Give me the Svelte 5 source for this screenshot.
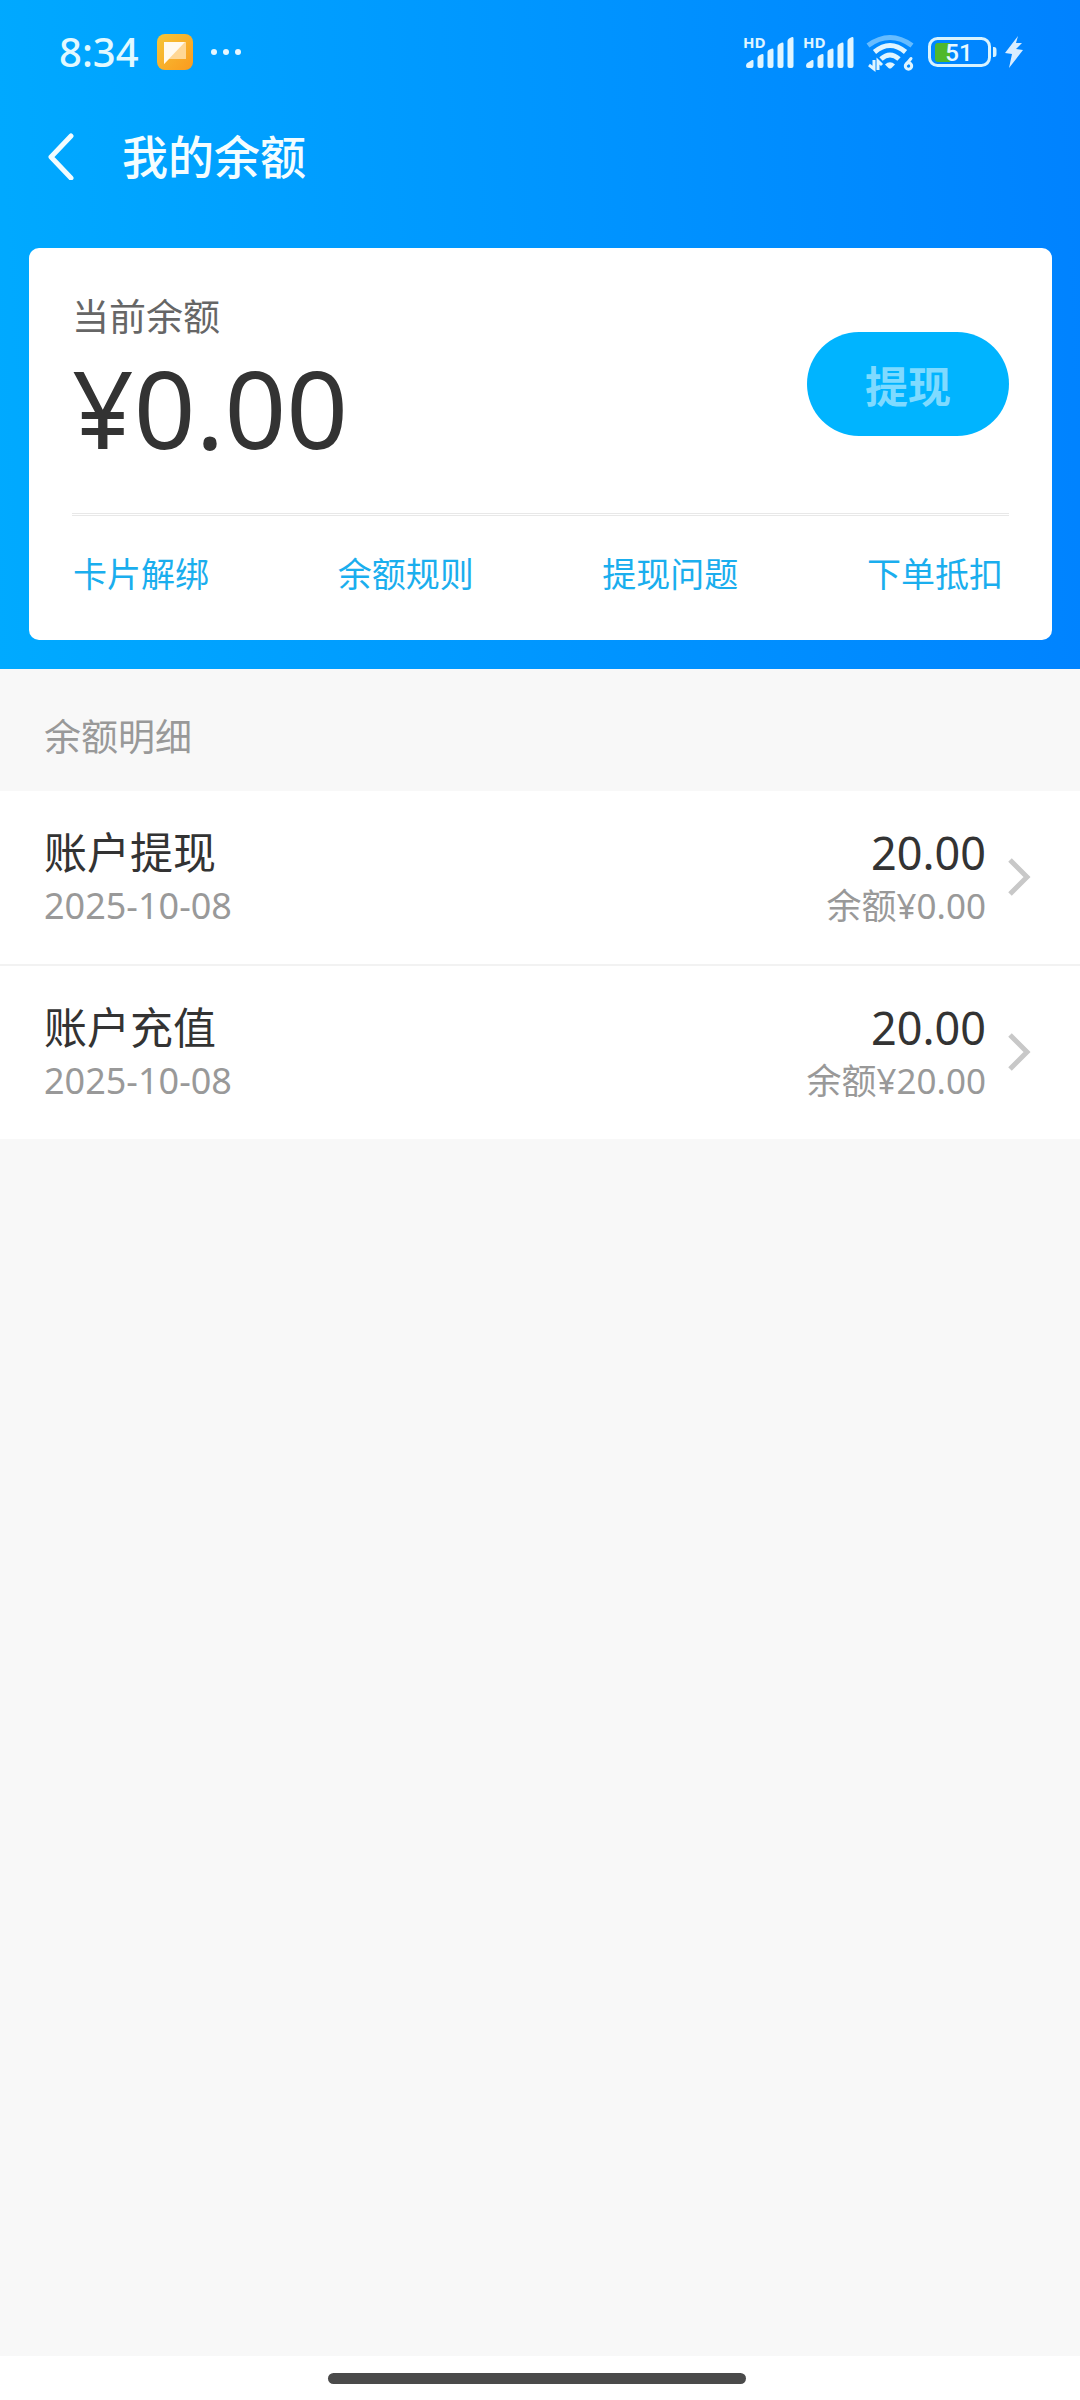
<script>
  const links = ['卡片解绑', '余额规则', '提现问题', '下单抵扣'];
  const records = [
    { title: '账户提现', date: '2025-10-08', amount: '20.00', balance: '0.00' },
    { title: '账户充值', date: '2025-10-08', amount: '20.00', balance: '20.00' }
  ];
  const sims = [1, 2];
</script>

<div class="page">
  <header class="top">
    <div class="status">
      <div class="status-left">
        <span class="time">8:34</span>
        <svg class="app" width="36" height="36" viewBox="0 0 36 36" aria-hidden="true">
          <defs>
            <linearGradient id="gold" x1="0" y1="0" x2="1" y2="1">
              <stop offset="0" stop-color="#f5c638" />
              <stop offset="1" stop-color="#fb9a1e" />
            </linearGradient>
          </defs>
          <rect width="36" height="36" rx="8" fill="url(#gold)" />
          <path d="M7 8H29V25H12L7 30Z" fill="#ffd795" />
          <path d="M7 8H28L7 30Z" fill="#fffaf0" />
        </svg>
        <svg width="32" height="36" viewBox="0 0 32 36" fill="#e6f7ff" aria-hidden="true">
          <circle cx="4" cy="18" r="3" />
          <circle cx="16" cy="18" r="3" />
          <circle cx="28" cy="18" r="3" />
        </svg>
      </div>
      <div class="status-right">
        {#each sims as sim (sim)}
          <svg width="54" height="44" viewBox="-1 -4 54 44" fill="#e0f5ff" aria-hidden="true">
            <text class="hd" x="0" y="14">HD</text>
            <path d="M3 32Q3 29 6 28L9 26Q10.500 25.500 10.500 27V32Q10.500 34 8.500 34H5Q3 34 3 32Z" />
            <path d="M14.500 24Q14.500 22.500 16 21.500L18.500 20.200Q20.500 19.500 20.500 21V32Q20.500 34 18.500 34H16.500Q14.500 34 14.500 32Z" />
            <path d="M24.500 18Q24.500 16.500 26 15.800L28.500 14.800Q30.500 14 30.500 16V32Q30.500 34 28.500 34H26.500Q24.500 34 24.500 32Z" />
            <path d="M34.500 13Q34.500 11 36 10L38.500 8.800Q40.500 8 40.500 10V32Q40.500 34 38.500 34H36.500Q34.500 34 34.500 32Z" />
            <path d="M44.500 7Q44.500 5.500 46 4.500L48.500 3.200Q50.500 2.500 50.500 4.500V32Q50.500 34 48.500 34H46.500Q44.500 34 44.500 32Z" />
          </svg>
        {/each}
        <svg width="58" height="44" viewBox="-1 -4 58 44" fill="none" aria-hidden="true">
          <path d="M5 11.500Q27 -4.500 49 11.500" stroke="#66bcff" stroke-width="5" />
          <path d="M11.500 18Q27 5 42.500 18" stroke="#e0f5ff" stroke-width="5" />
          <path d="M18 25Q27 17 36 25" stroke="#e0f5ff" stroke-width="5" />
          <path d="M22 30.500Q27 26 32 30.500L28.500 34Q27 35 25.500 34Z" fill="#e0f5ff" />
          <path d="M11 26V35L6 31M15 36V27L19 31" stroke="#e0f5ff" stroke-width="3" />
          <path d="M48 24.500L43.500 30" stroke="#e0f5ff" stroke-width="3" stroke-linecap="round" />
          <circle cx="45.500" cy="32" r="3.200" stroke="#e0f5ff" stroke-width="3" />
        </svg>
        <svg width="72" height="44" viewBox="-1 -4 72 44" aria-hidden="true">
          <rect x="2.500" y="4.500" width="60" height="27" rx="8" fill="none" stroke="#d8f3ff" stroke-width="3" />
          <path d="M11 9H23V28H11Q8 28 8 25V12Q8 9 11 9Z" fill="#4fb82c" />
          <path d="M66 13H67Q69.500 13 69.500 16V20Q69.500 23 67 23H66Z" fill="#d8f3ff" />
          <text class="charge" x="32" y="27" text-anchor="middle">51</text>
        </svg>
        <svg width="20" height="44" viewBox="-1 -4 20 44" aria-hidden="true">
          <path d="M13 2L0 19L7 20L4 34L18 16L11 15L17 9L11 9Z" fill="#d9edff" />
        </svg>
      </div>
    </div>

    <nav class="bar">
      <button class="back" aria-label="返回">
        <svg width="26" height="48" viewBox="0 0 26 48" fill="none" stroke="#f2fcff" stroke-width="5" stroke-linecap="round" stroke-linejoin="round" aria-hidden="true">
          <path d="M23 4L3 25L23 46" />
        </svg>
      </button>
      <h1>我的余额</h1>
    </nav>

    <section class="card">
      <div class="summary">
        <div>
          <p class="label">当前余额</p>
          <p class="total">¥0.00</p>
        </div>
        <button class="withdraw" disabled>提现</button>
      </div>
      <div class="links">
        {#each links as link (link)}
          <a href="#top">{link}</a>
        {/each}
      </div>
    </section>
  </header>

  <main>
    <h2>余额明细</h2>
    <ul>
      {#each records as r (r.title)}
        <li>
          <a class="row" href="#top">
            <span class="col">
              <span class="title">{r.title}</span>
              <span class="date">{r.date}</span>
            </span>
            <span class="col end">
              <span class="amount">{r.amount}</span>
              <span class="balance">余额¥{r.balance}</span>
            </span>
            <svg width="24" height="40" viewBox="0 0 24 40" fill="none" stroke="#c8c8c8" stroke-width="5" aria-hidden="true">
              <path d="M3 3L20 20L3 37" />
            </svg>
          </a>
        </li>
      {/each}
    </ul>
  </main>

  <footer><span class="pill"></span></footer>
</div>

<style>
  :global(body) {
    margin: 0;
  }
  .page {
    min-height: 100vh;
    display: flex;
    flex-direction: column;
    background: #f8f8f8;
    color: #333;
    font-family: 'Noto Sans', 'Noto Sans CJK SC', sans-serif;
  }
  h1, h2, p, ul {
    margin: 0;
    padding: 0;
  }
  button {
    border: 0;
    padding: 0;
    font-family: inherit;
  }
  a {
    text-decoration: none;
    color: inherit;
  }
  svg {
    display: block;
    flex: none;
  }
  .top {
    padding-bottom: 29px;
    background: linear-gradient(87deg, #00aaff, #0082ff);
  }
  .status {
    height: 104px;
    display: flex;
    align-items: center;
    justify-content: space-between;
    padding: 0 56px 0 59px;
  }
  .status-left,
  .status-right {
    display: flex;
    align-items: center;
  }
  .status-right {
    gap: 6px;
  }
  .time {
    color: #e2f9ff;
    font-size: 40px;
    line-height: 48px;
    font-weight: 500;
  }
  .app {
    margin: 0 17px 0 18px;
  }
  .hd {
    font: 700 15px 'Open Sans', sans-serif;
  }
  .charge {
    font: 500 24px Roboto, sans-serif;
    fill: #e6f9ff;
  }
  .bar {
    height: 104px;
    display: flex;
    align-items: center;
    gap: 48px;
    padding: 0 48px;
    margin-bottom: 40px;
  }
  .back {
    background: none;
  }
  h1 {
    color: #f4fdff;
    font-size: 46px;
    line-height: 64px;
    font-weight: 500;
  }
  .card {
    margin: 0 28px 0 29px;
    padding: 0 43px;
    border-radius: 10px;
    background: #fff;
  }
  .summary {
    display: flex;
    align-items: center;
    justify-content: space-between;
    padding: 45px 0 38px;
    border-bottom: 3px double #e8e8e8;
  }
  .label {
    color: #666;
    font-size: 37px;
    line-height: 48px;
  }
  .total {
    font-size: 108px;
    line-height: 134px;
  }
  .withdraw {
    width: 202px;
    height: 104px;
    border-radius: 52px;
    background: #00b4ff;
    color: #7fdaff;
    font-size: 43px;
    font-weight: 700;
  }
  .links {
    display: flex;
    justify-content: space-between;
    padding: 34px 6px 42px 1px;
    color: #1aaeee;
    font-size: 34px;
    line-height: 48px;
  }
  main {
    flex: 1;
  }
  h2 {
    padding: 44px 44px 30px;
    color: #999;
    font-size: 37px;
    line-height: 48px;
    font-weight: 400;
  }
  ul {
    list-style: none;
  }
  li {
    background: #fff;
  }
  li + li {
    border-top: 2px solid #f2f2f2;
  }
  .row {
    display: flex;
    align-items: center;
    padding: 33px 49px 34px 44px;
  }
  .col {
    flex: 1;
    display: flex;
    flex-direction: column;
  }
  .end {
    text-align: right;
    margin-right: 21px;
  }
  .title,
  .amount {
    font-size: 43px;
    line-height: 58px;
  }
  .amount {
    font-size: 45px;
  }
  .date,
  .balance {
    color: #999;
    font-size: 35px;
    line-height: 48px;
  }
  .date {
    font-size: 36px;
  }
  footer {
    height: 44px;
    display: flex;
    align-items: flex-start;
    justify-content: center;
    padding: 17px 6px 0 0;
    box-sizing: border-box;
    background: #fff;
  }
  .pill {
    width: 418px;
    height: 11px;
    border-radius: 6px;
    background: #4a4a4a;
  }
</style>
